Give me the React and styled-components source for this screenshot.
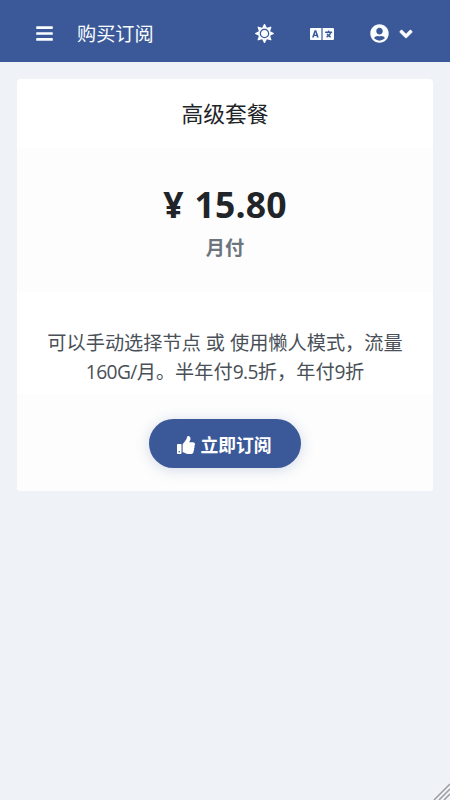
import React from "react";
import styled, { createGlobalStyle } from "styled-components";
import {
  FaBars,
  FaSun,
  FaLanguage,
  FaUserCircle,
  FaAngleDown,
  FaThumbsUp,
} from "react-icons/fa";

const GlobalStyle = createGlobalStyle`
  * {
    box-sizing: border-box;
  }

  body {
    margin: 0;
    background: #eff3f8;
    color: #212529;
    font-family: "Open Sans", "Noto Sans CJK SC", sans-serif;
  }
`;

const Page = styled.div`
  position: relative;
  height: 800px;
  overflow: hidden;
`;

const Header = styled.header`
  display: flex;
  justify-content: space-between;
  align-items: center;
  height: 62px;
  padding: 5px 34px 0 35px;
  background: #3b5998;
  color: #fafdff;
`;

const HeaderGroup = styled.div`
  display: flex;
  align-items: center;
  gap: ${({ $gap }) => $gap}px;
`;

const HeaderButton = styled.button`
  display: flex;
  align-items: center;
  gap: 7px;
  padding: 0;
  border: 0;
  background: none;
  color: inherit;
`;

const HeaderTitle = styled.span`
  font-size: 19.2px;
  line-height: 28px;
`;

const Main = styled.main`
  padding: 17px;
`;

const Plan = styled.section`
  overflow: hidden;
  height: 412px;
  border-radius: 4px;
  background: #fff;
  text-align: center;
`;

const PlanHeader = styled.h3`
  height: 69px;
  margin: 0;
  padding-top: 19px;
  font-size: 21.8px;
  font-weight: 400;
  line-height: 32px;
`;

const PlanPrice = styled.div`
  height: 144px;
  padding-top: 34px;
  background: #fdfdfd;
`;

const Price = styled.div`
  font-size: 35.5px;
  font-weight: 700;
  letter-spacing: 0.2px;
  word-spacing: 1.5px;
  line-height: 44px;
`;

const Period = styled.div`
  margin-top: 8px;
  color: #6c757d;
  font-size: 19.2px;
  font-weight: 700;
  line-height: 28px;
`;

const Description = styled.div`
  height: 102px;
  padding: 37px 26px 0;
  color: #495057;
  font-size: 19.2px;
  line-height: 28.8px;
`;

const Latin = styled.span`
  letter-spacing: -0.6px;
`;

const PlanFooter = styled.div`
  display: flex;
  justify-content: center;
  height: 97px;
  padding-top: 25px;
  background: #fdfdfd;
`;

const SubscribeButton = styled.button`
  display: flex;
  justify-content: center;
  align-items: center;
  gap: 5px;
  width: 152px;
  height: 49px;
  padding: 3px 1px 0 0;
  border: 0;
  border-radius: 25px;
  background: #3b5998;
  box-shadow: 0 2px 14px rgba(59, 89, 152, 0.22);
  color: #fff;
  font-family: inherit;
  font-size: 17.8px;
  font-weight: 700;
  line-height: 24px;
`;

const ResizeGrip = styled.svg`
  position: absolute;
  right: 0;
  bottom: 0;
`;

function App() {
  return (
    <>
      <GlobalStyle />
      <Page>
        <Header>
          <HeaderGroup $gap={23}>
            <HeaderButton aria-label="menu">
              <FaBars size={19} />
            </HeaderButton>
            <HeaderTitle>购买订阅</HeaderTitle>
          </HeaderGroup>
          <HeaderGroup $gap={36}>
            <HeaderButton aria-label="theme">
              <FaSun size={19} />
            </HeaderButton>
            <HeaderButton aria-label="language">
              <FaLanguage size={24} />
            </HeaderButton>
            <HeaderButton aria-label="account">
              <FaUserCircle size={19} />
              <FaAngleDown size={20} stroke="currentColor" strokeWidth={12} />
            </HeaderButton>
          </HeaderGroup>
        </Header>
        <Main>
          <Plan>
            <PlanHeader>高级套餐</PlanHeader>
            <PlanPrice>
              <Price>¥ 15.80</Price>
              <Period>月付</Period>
            </PlanPrice>
            <Description>
              可以手动选择节点 或 使用懒人模式，流量<Latin>160G/</Latin>
              月。半年付<Latin>9.5</Latin>折，年付<Latin>9</Latin>折
            </Description>
            <PlanFooter>
              <SubscribeButton>
                <FaThumbsUp size={18} />
                立即订阅
              </SubscribeButton>
            </PlanFooter>
          </Plan>
        </Main>
        <ResizeGrip width="17" height="17" viewBox="0 0 17 17">
          <path
            d="M1 17L17 1M6 17L17 6M11 17L17 11"
            stroke="#9b9c9f"
            strokeWidth="1.5"
          />
        </ResizeGrip>
      </Page>
    </>
  );
}

export default App;
